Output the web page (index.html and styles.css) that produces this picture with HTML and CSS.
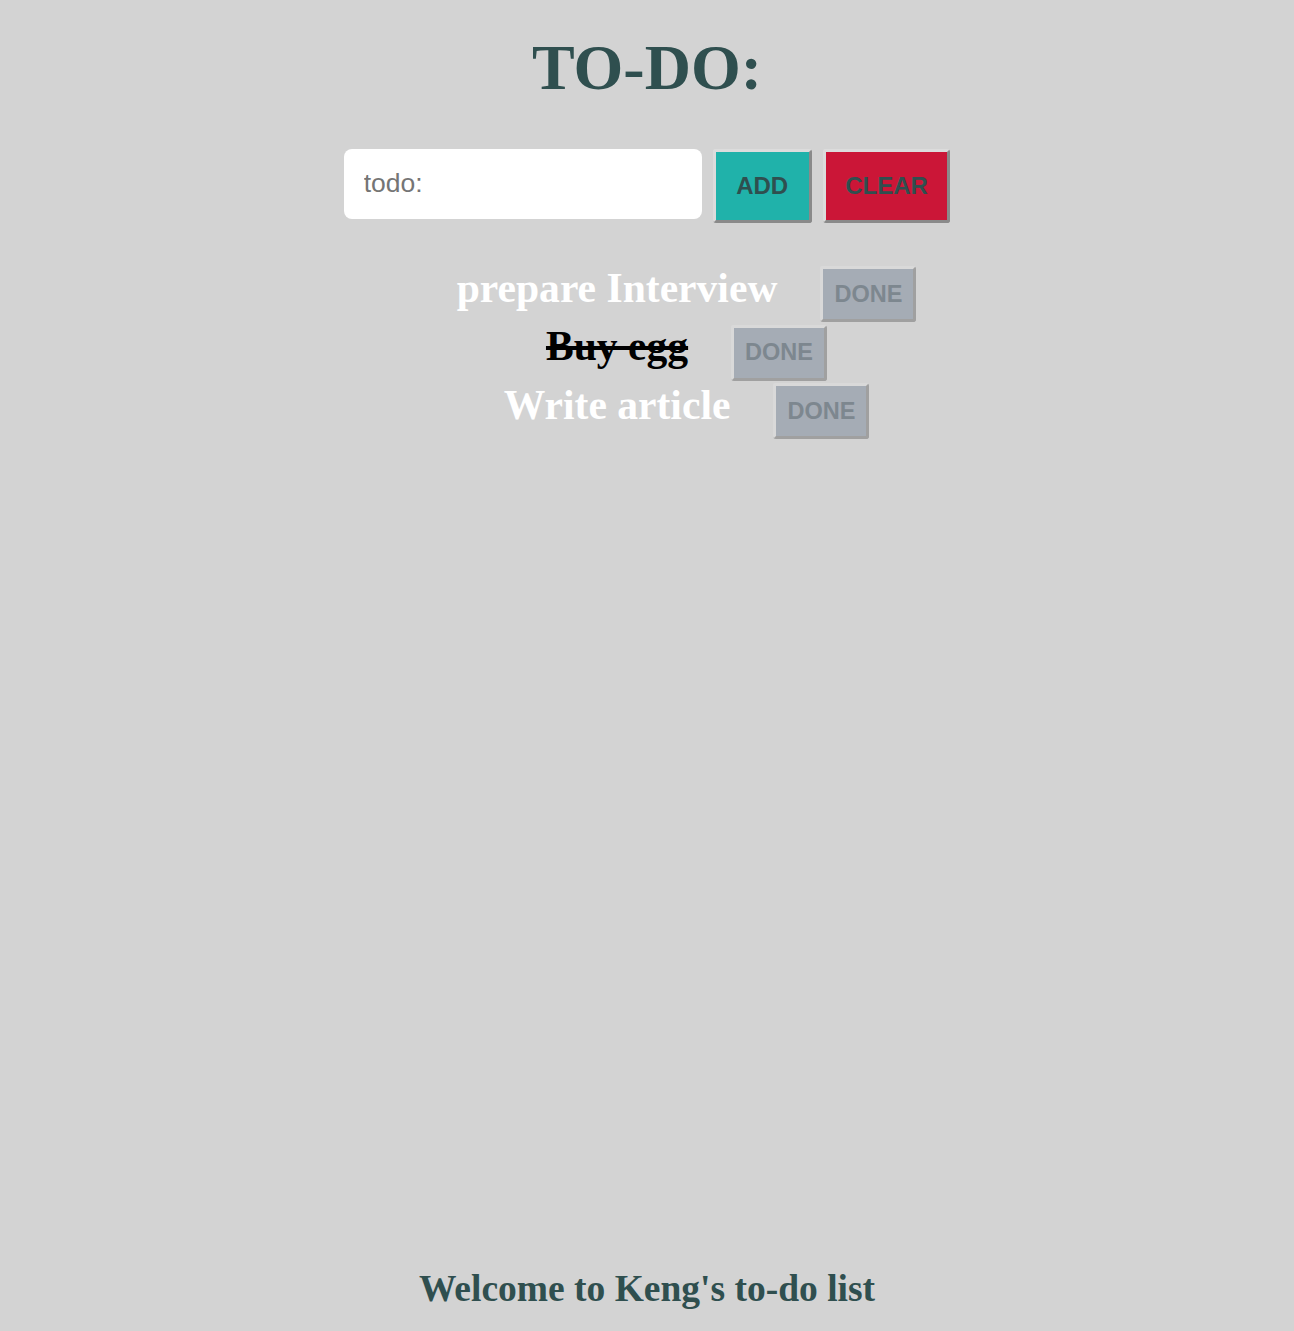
FILE: index.html
```html
<!DOCTYPE html>
<html lang="en">
<head>
<meta charset="utf-8">
<title>TO-DO</title>
<link rel="stylesheet" href="styles.css">
</head>
<body>
<main class="app">
  <h1 class="title">TO-DO:</h1>
  <div class="entry">
    <input class="todo-input" type="text" placeholder="todo:">
    <button class="btn btn-add">ADD</button>
    <button class="btn btn-clear">CLEAR</button>
  </div>
  <ul class="list">
    <li class="item"><span class="item-text">prepare Interview</span><button class="btn btn-done">DONE</button></li>
    <li class="item"><span class="item-text is-done">Buy egg</span><button class="btn btn-done">DONE</button></li>
    <li class="item"><span class="item-text">Write article</span><button class="btn btn-done">DONE</button></li>
  </ul>
</main>
<footer class="footer">Welcome to Keng's to-do list</footer>
</body>
</html>
```
FILE: styles.css
```css
html, body {
  margin: 0;
  padding: 0;
}
body {
  background: #d3d3d3;
  min-height: 100vh;
  display: flex;
  flex-direction: column;
  font-family: "Liberation Serif", "Times New Roman", serif;
}
.app {
  display: flex;
  flex-direction: column;
  align-items: stretch;
}
.title {
  margin: 31px 0 0;
  text-align: center;
  font-size: 64px;
  font-weight: bold;
  color: #2f4f4f;
  line-height: 1.15;
}
.entry {
  display: flex;
  justify-content: center;
  align-items: flex-start;
  gap: 11px;
  margin-top: 44px;
}
.todo-input {
  box-sizing: border-box;
  width: 358px;
  height: 70px;
  border: none;
  border-radius: 8px;
  background: #fff;
  padding: 0 20px;
  font-family: "Liberation Sans", Arial, sans-serif;
  font-size: 26.5px;
  color: #333;
  outline: none;
}
.todo-input::placeholder {
  color: #757575;
}
.btn {
  font-family: "Liberation Sans", Arial, sans-serif;
  font-weight: bold;
  font-size: 24px;
  line-height: 27px;
  border-width: 3px;
  border-style: solid;
  border-color: #dcdcdc #8a8a8a #8a8a8a #dcdcdc;
  border-radius: 3px;
  cursor: pointer;
}
.btn-add {
  background: #20b2aa;
  color: #2f4f4f;
  padding: 20px 20.5px 21px;
}
.btn-clear {
  background: #cb1637;
  color: #2f4f4f;
  padding: 20px 19.5px 21px;
}
.list {
  list-style: none;
  margin: 41px 0 0;
  padding: 0 0 0 79px;
  display: flex;
  flex-direction: column;
  gap: 0;
}
.item {
  display: flex;
  justify-content: center;
  align-items: baseline;
  gap: 43px;
}
.item-text {
  font-size: 41.6px;
  font-weight: bold;
  color: #fff;
}
.item-text.is-done {
  color: #000;
  text-decoration: line-through;
}
.btn-done {
  font-size: 23.5px;
  background: #a5acb5;
  color: #7d878f;
  padding: 11.5px 11px;
  border-color: #d9d9d9 #a0a0a0 #a0a0a0 #d9d9d9;
}
.footer {
  margin-top: auto;
  padding-bottom: 21px;
  text-align: center;
  font-size: 37.5px;
  font-weight: bold;
  color: #2f4f4f;
}
```
